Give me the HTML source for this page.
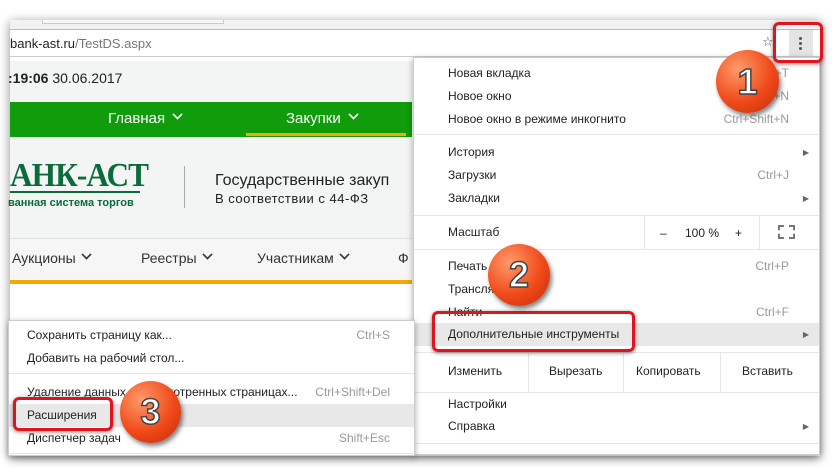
<!DOCTYPE html><html><head><meta charset="utf-8"><style>
*{box-sizing:border-box;margin:0;padding:0}
body{width:834px;height:468px;background:#fff;font-family:"Liberation Sans","DejaVu Sans",sans-serif;font-size:12px;color:#222;position:relative;overflow:hidden}
.abs{position:absolute}
.win{left:10px;top:20px;width:810px;height:436px;background:#fff;box-shadow:0 2px 10px rgba(0,0,0,.45)}
.menu{background:#fff;box-shadow:0 2px 6px rgba(0,0,0,.35);border:1px solid #ccc}
.it{position:absolute;left:0;right:0;height:23px;line-height:23px;padding-left:34px}
.sc{position:absolute;right:30px;top:0;color:#999}
.ar{position:absolute;right:10px;top:0;font-size:8px;color:#666}
.sep{position:absolute;left:0;right:0;height:1px;background:#e6e6e6}
.num{border-radius:50%;background:radial-gradient(circle at 35% 30%,#ff9a6a,#f04a1a 55%,#c22a08);box-shadow:2px 3px 5px rgba(0,0,0,.5);color:#fff;font-weight:bold;font-size:36px;text-align:center;-webkit-text-stroke:1.5px #444;font-family:"Liberation Sans",sans-serif}
.rr{border:3px solid #e0141e;border-radius:6px;box-shadow:0 1px 4px rgba(0,0,0,.5)}
.chev{display:inline-block;width:9px;height:9px;border-right:2px solid currentColor;border-bottom:2px solid currentColor;transform:rotate(45deg) scale(.8);margin-left:8px;position:relative;top:-4px}
</style></head><body>
<div class="abs win"></div>
<div class="abs" style="left:10px;top:20px;width:810px;height:10px;background:#f2f2f2;border-bottom:1px solid #bbb"></div>
<div class="abs" style="left:42px;top:20px;width:182px;height:4px;border:1px solid #ccc;border-top:none;background:#f7f7f7"></div>
<div class="abs" style="left:10px;top:30px;width:810px;height:27px;background:#fff;border-bottom:1px solid #ccc"></div>
<div class="abs" style="left:10px;top:36px;font-size:13px;color:#222">bank-ast.ru<span style="color:#777">/TestDS.aspx</span></div>
<div class="abs" style="left:762px;top:34px;font-size:13px;color:#555">☆</div>
<div class="abs" style="left:789px;top:30px;width:24px;height:26px;background:#e4e4e4"></div>
<div class="abs" style="left:799px;top:37px;width:3px;height:3px;background:#555;border-radius:50%;box-shadow:0 5px 0 #555,0 10px 0 #555"></div>
<!-- page -->
<div class="abs" style="left:10px;top:61px;width:402px;height:220px;background:#f3f4f4"></div>
<div class="abs" style="left:8px;top:70px;font-family:'Liberation Sans',sans-serif;font-size:14px"><b>:19:06</b> 30.06.2017</div>
<div class="abs" style="left:10px;top:102px;width:402px;height:35px;background:#119c0c"></div>
<div class="abs" style="left:108px;top:110px;color:#fff;font-size:15px">Главная<span class="chev"></span></div>
<div class="abs" style="left:286px;top:110px;color:#fff;font-size:15px">Закупки<span class="chev"></span></div>
<div class="abs" style="left:246px;top:133px;width:160px;height:3px;background:#f5a800"></div>
<div class="abs" style="left:10px;top:157px;font-family:'Liberation Serif',serif;font-size:34px;font-weight:bold;color:#0c6b3a;letter-spacing:-1px;transform:scaleX(.92);transform-origin:left">АНК-АСТ</div>
<div class="abs" style="left:10px;top:191px;width:130px;height:2px;background:#0c6b3a"></div>
<div class="abs" style="left:8px;top:197px;font-size:11px;color:#0c6b3a;font-weight:bold">ванная система торгов</div>
<div class="abs" style="left:184px;top:166px;width:1px;height:42px;background:#aaa"></div>
<div class="abs" style="left:215px;top:172px;font-size:16px">Государственные закуп</div>
<div class="abs" style="left:215px;top:191px;font-size:13px;letter-spacing:.5px">В соответствии с 44-ФЗ</div>
<div class="abs" style="left:10px;top:238px;width:402px;height:42px;background:#f6f6f6;border-top:1px solid #e2e2e2"></div>
<div class="abs" style="left:12px;top:250px;font-size:14px;color:#333">Аукционы<span class="chev" style="margin-left:6px"></span></div>
<div class="abs" style="left:141px;top:250px;font-size:14px;color:#333">Реестры<span class="chev" style="margin-left:6px"></span></div>
<div class="abs" style="left:257px;top:250px;font-size:14px;color:#333">Участникам<span class="chev" style="margin-left:6px"></span></div>
<div class="abs" style="left:398px;top:250px;font-size:14px;color:#333">Ф</div>
<div class="abs" style="left:10px;top:280px;width:402px;height:4px;background:#f5a800"></div>
<!-- main menu -->
<div class="abs menu" style="left:413px;top:57px;width:407px;height:398px">
<div class="it" style="top:4px">Новая вкладка<span class="sc">Ctrl+T</span></div>
<div class="it" style="top:27px">Новое окно<span class="sc">Ctrl+N</span></div>
<div class="it" style="top:50px">Новое окно в режиме инкогнито<span class="sc">Ctrl+Shift+N</span></div>
<div class="sep" style="top:76px"></div>
<div class="it" style="top:83px">История<span class="ar">▶</span></div>
<div class="it" style="top:106px">Загрузки<span class="sc">Ctrl+J</span></div>
<div class="it" style="top:129px">Закладки<span class="ar">▶</span></div>
<div class="sep" style="top:157px"></div>
<div class="it" style="top:163px">Масштаб</div>
<div class="abs" style="left:230px;top:157px;width:1px;height:34px;background:#e6e6e6"></div>
<div class="abs" style="left:345px;top:157px;width:1px;height:34px;background:#e6e6e6"></div>
<div class="abs" style="left:246px;top:168px">–</div>
<div class="abs" style="left:271px;top:168px">100 %</div>
<div class="abs" style="left:321px;top:168px">+</div>
<div class="abs" style="left:364px;top:167px;width:17px;height:14px;border:2px dashed #777"></div>
<div class="sep" style="top:191px"></div>
<div class="it" style="top:197px">Печать<span class="sc">Ctrl+P</span></div>
<div class="it" style="top:220px">Трансляция</div>
<div class="it" style="top:243px">Найти<span class="sc">Ctrl+F</span></div>
<div class="it" style="top:265px;background:#e8e8e8">Дополнительные инструменты<span class="ar">▶</span></div>
<div class="sep" style="top:294px"></div>
<div class="it" style="top:301px;height:32px;line-height:24px">Изменить</div>
<div class="abs" style="left:114px;top:294px;width:1px;height:40px;background:#e6e6e6"></div>
<div class="abs" style="left:209px;top:294px;width:1px;height:40px;background:#e6e6e6"></div>
<div class="abs" style="left:306px;top:294px;width:1px;height:40px;background:#e6e6e6"></div>
<div class="abs" style="left:135px;top:306px">Вырезать</div>
<div class="abs" style="left:222px;top:306px">Копировать</div>
<div class="abs" style="left:328px;top:306px">Вставить</div>
<div class="sep" style="top:334px"></div>
<div class="it" style="top:335px">Настройки</div>
<div class="it" style="top:357px">Справка<span class="ar">▶</span></div>
<div class="sep" style="top:385px"></div>
</div>
<!-- submenu -->
<div class="abs menu" style="left:8px;top:320px;width:407px;height:136px">
<div class="it" style="top:3px;padding-left:18px">Сохранить страницу как...<span class="sc" style="right:24px">Ctrl+S</span></div>
<div class="it" style="top:26px;padding-left:18px">Добавить на рабочий стол...</div>
<div class="sep" style="top:52px"></div>
<div class="it" style="top:60px;padding-left:18px">Удаление данных о просмотренных страницах...<span class="sc" style="right:24px">Ctrl+Shift+Del</span></div>
<div class="it" style="top:83px;padding-left:18px;background:#e8e8e8">Расширения</div>
<div class="it" style="top:106px;padding-left:18px">Диспетчер задач<span class="sc" style="right:24px">Shift+Esc</span></div>
<div class="sep" style="top:132px"></div>
</div>
<!-- highlights -->
<div class="abs rr" style="left:773px;top:22px;width:50px;height:41px"></div>
<div class="abs rr" style="left:432px;top:311px;width:203px;height:41px"></div>
<div class="abs rr" style="left:13px;top:397px;width:100px;height:34px"></div>
<div class="abs num" style="left:716px;top:50px;width:63px;height:63px;line-height:63px">1</div>
<div class="abs num" style="left:488px;top:244px;width:62px;height:62px;line-height:62px">2</div>
<div class="abs num" style="left:120px;top:381px;width:61px;height:62px;line-height:62px">3</div>
</body></html>
